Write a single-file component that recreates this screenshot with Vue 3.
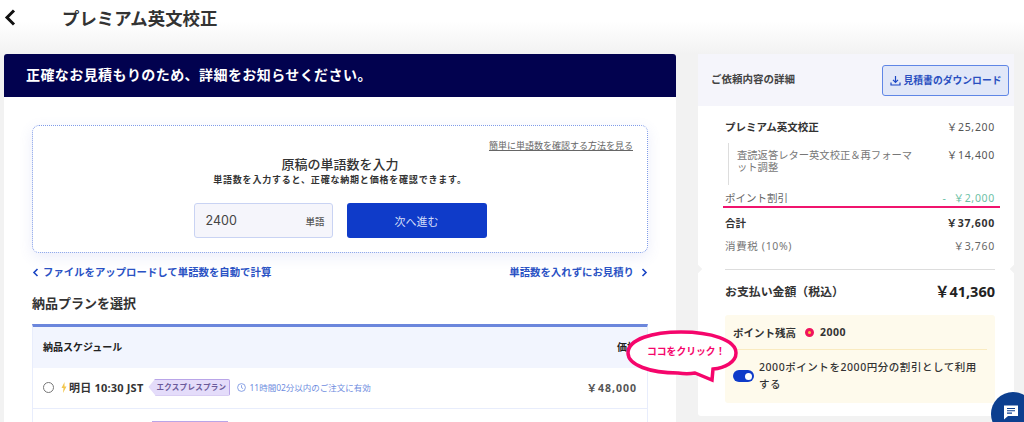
<template>
  <div class="page">
    <!-- 上部バー -->
    <header class="topbar">
      <svg class="back" width="12" height="17" viewBox="0 0 12 17"><path d="M10 1.500 3 8.500l7 7" fill="none" stroke="#111" stroke-width="3" /></svg>
      <h1>プレミアム英文校正</h1>
    </header>

    <div class="main">
      <!-- 左カラム -->
      <section class="left-card">
        <div class="banner">正確なお見積もりのため、詳細をお知らせください。</div>
        <div class="left-body">
          <div class="word-box">
            <a class="how-link">簡単に単語数を確認する方法を見る</a>
            <h2>原稿の単語数を入力</h2>
            <p class="sub">単語数を入力すると、正確な納期と価格を確認できます。</p>
            <div class="input-row">
              <div class="word-input"><span class="num">2400</span><span class="unit">単語</span></div>
              <button class="next">次へ進む</button>
            </div>
          </div>

          <div class="links">
            <a><svg width="7" height="9" viewBox="0 0 7 9"><path d="M5.500 1 2 4.500 5.500 8" fill="none" stroke="#1a45c4" stroke-width="1.600" /></svg>ファイルをアップロードして単語数を自動で計算</a>
            <a>単語数を入れずにお見積り<svg class="right" width="7" height="9" viewBox="0 0 7 9"><path d="M1.500 1 5 4.500 1.500 8" fill="none" stroke="#1a45c4" stroke-width="1.600" /></svg></a>
          </div>

          <h3>納品プランを選択</h3>
          <div class="plan-table">
            <div class="plan-head"><span>納品スケジュール</span><span>価格</span></div>
            <div class="plan-row">
              <span class="radio"></span>
              <svg class="bolt" width="6" height="11" viewBox="0 0 6 11"><path d="M3.500 0 .5 6h2L2 11l3.500-6.500h-2z" fill="#f2c64e" /></svg>
              <span class="date">明日 10:30 JST</span>
              <span class="tag">エクスプレスプラン</span>
              <svg class="clock" width="9" height="9" viewBox="0 0 9 9"><circle cx="4.500" cy="4.500" r="3.900" fill="none" stroke="#6f8de0" stroke-width=".8" /><path d="M4.500 2.200v2.500l1.600.9" fill="none" stroke="#6f8de0" stroke-width=".8" /></svg>
              <span class="limit">11時間02分以内のご注文に有効</span>
              <span class="price">￥48,000</span>
            </div>
            <div class="plan-row next-row"><span class="tag-next"></span></div>
          </div>
        </div>
      </section>

      <!-- 右カラム -->
      <aside class="side-card">
        <div class="side-head">
          <span class="side-title">ご依頼内容の詳細</span>
          <button class="dl">
            <svg width="11" height="11" viewBox="0 0 11 11"><path d="M5.500 1v6M3 4.800l2.500 2.500L8 4.800M1 7.500V10h9V7.500" fill="none" stroke="#1a45c4" stroke-width="1.200" /></svg>
            見積書のダウンロード
          </button>
        </div>
        <div class="side-body">
          <div class="line strong"><span>プレミアム英文校正</span><span class="yen normal">￥25,200</span></div>
          <div class="line option">
            <span class="opt-name">査読返答レター英文校正＆再フォーマット調整</span><span class="yen">￥14,400</span>
          </div>
          <div class="line discount"><span>ポイント割引</span><span class="yen green">-&nbsp; ￥2,000</span></div>
          <div class="line total"><span>合計</span><span class="yen">￥37,600</span></div>
          <div class="line tax"><span class="tax-name">消費税 (10%)</span><span class="yen">￥3,760</span></div>
          <div class="pay"><span>お支払い金額（税込）</span><span class="pay-num">￥41,360</span></div>
          <div class="points">
            <div class="balance">
              <span>ポイント残高</span><i class="coin"></i><span class="pt">2000</span>
            </div>
            <div class="use">
              <span class="toggle"></span>
              <span>2000ポイントを2000円分の割引として利用する</span>
            </div>
          </div>
        </div>
      </aside>
    </div>

    <!-- 吹き出し -->
    <div class="callout">
      <svg width="116" height="56" viewBox="0 0 116 56">
        <path d="M56 3c30 0 55 8 55 21 0 9-11 15-23 16l-1 11-17-7c-5 1-11 1-17 0C25 44 3 36 3 24 3 10 28 3 56 3z" fill="#fff" stroke="#f5056b" stroke-width="3.500" />
      </svg>
      <span>ココをクリック！</span>
    </div>

    <div class="chat">
      <svg width="16" height="15" viewBox="0 0 16 15"><path d="M1 .5h14v10.500H5L1 14.500z" fill="#fff" /><path d="M4 3.500h8M4 5.800h8M4 8.100h5" stroke="#0c3f8f" stroke-width="1.100" /></svg>
    </div>
  </div>
</template>

<script setup>
</script>

<style>
html, body { margin: 0; }
</style>

<style scoped>
.page {
  position: relative;
  width: 1024px;
  height: 422px;
  overflow: hidden;
  background: #f2f2f2;
  color: #333;
  font-family: "Noto Sans", "Noto Sans CJK JP", sans-serif;
  font-size: 10.500px;
}

.topbar {
  display: flex;
  align-items: center;
  height: 34px;
  padding: 0 0 20px 4px;
  background: linear-gradient(#fff 40%, #f2f2f2);
}
.topbar h1 {
  margin: 0 0 0 46px;
  font-size: 17.400px;
  font-weight: 700;
  color: #333;
}
.back { flex: none; }

.main {
  display: flex;
  align-items: flex-start;
  gap: 22px;
  padding-left: 4px;
}

.left-card {
  width: 672px;
  height: 368px;
  background: #fff;
  border-radius: 3px 3px 0 0;
  overflow: hidden;
  flex: none;
}
.banner {
  height: 43px;
  line-height: 41px;
  padding-left: 22px;
  background: #02024f;
  color: #fff;
  font-size: 14px;
  font-weight: 700;
  letter-spacing: .42px;
}
.left-body {
  padding: 28px 28px 0;
}

.word-box {
  display: flex;
  flex-direction: column;
  align-items: center;
  height: 128px;
  box-sizing: border-box;
  padding: 14px 14px 0;
  border: 1px dotted #7f9be8;
  border-radius: 7px;
  box-shadow: 0 4px 14px rgba(90, 110, 210, .12);
}
.how-link {
  align-self: flex-end;
  font-size: 9px;
  line-height: 12px;
  color: #666;
  text-decoration: underline;
}
.word-box h2 {
  margin: 3px 0 0;
  font-size: 13px;
  line-height: 18px;
  font-weight: 500;
  color: #333;
}
.sub {
  margin: 0;
  font-size: 9px;
  line-height: 14px;
  font-weight: 700;
  letter-spacing: .8px;
  color: #333;
}
.input-row {
  display: flex;
  gap: 14px;
  margin-top: 16px;
}
.word-input {
  display: flex;
  align-items: center;
  justify-content: space-between;
  width: 139px;
  height: 35px;
  box-sizing: border-box;
  padding: 0 7px 0 11px;
  border: 1px solid #c9d3f3;
  border-radius: 3px;
  background: #f5f5fb;
}
.num {
  font-family: Inter, sans-serif;
  font-size: 12.500px;
  color: #444;
}
.unit {
  font-size: 9.500px;
  font-weight: 500;
  color: #555;
}
.next {
  width: 140px;
  height: 35px;
  border: 0;
  border-radius: 3px;
  background: #0f3bc9;
  color: #d5def8;
  font-family: inherit;
  font-size: 11px;
}

.links {
  display: flex;
  justify-content: space-between;
  margin-top: 11px;
  line-height: 16px;
  font-weight: 700;
  font-size: 10.400px;
  color: #2a52c4;
}
.links a {
  display: flex;
  align-items: center;
}
.links svg { margin-right: 4px; }
.links .right { margin: 0 0 0 7px; }

.left-body h3 {
  margin: 13px 0 0;
  font-size: 13px;
  line-height: 20px;
  font-weight: 700;
  color: #333;
}

.plan-table {
  margin-top: 11px;
  border-top: 3px solid #6b86dc;
  border-left: 1px solid #e8edfc;
  border-right: 1px solid #e8edfc;
}
.plan-head {
  display: flex;
  align-items: center;
  justify-content: space-between;
  height: 39px;
  padding: 0 10px 2px;
  background: #f2f5fe;
  font-size: 10px;
  font-weight: 700;
  color: #222;
}
.plan-row {
  display: flex;
  align-items: center;
  height: 38px;
  padding: 0 10px 2px;
  border-bottom: 1px solid #e8edfc;
}
.radio {
  width: 9px;
  height: 9px;
  border: 1.500px solid #777;
  border-radius: 50%;
  flex: none;
}
.bolt { margin-left: 7px; }
.date {
  margin-left: 2px;
  font-size: 11px;
  font-weight: 700;
  letter-spacing: .2px;
  color: #333;
  white-space: nowrap;
}
.tag {
  margin-left: 5px;
  height: 15px;
  line-height: 15px;
  padding: 0 3px 0 8px;
  background: #e4dcfa;
  border: 1px solid #b9a5e8;
  border-left: 0;
  border-radius: 0 2px 2px 0;
  clip-path: polygon(0 50%, 7px 0, 100% 0, 100% 100%, 7px 100%);
  font-size: 7.500px;
  font-weight: 700;
  letter-spacing: .3px;
  color: #6a5a9a;
  white-space: nowrap;
}
.clock { margin-left: 7px; }
.limit {
  margin-left: 3px;
  font-size: 8.500px;
  color: #6f8de0;
  white-space: nowrap;
}
.price {
  margin-left: auto;
  font-size: 10.500px;
  font-weight: 700;
  letter-spacing: 1px;
  color: #555;
}
.next-row {
  align-items: flex-start;
  border-bottom: 0;
}
.tag-next {
  margin: 12px 0 0 109px;
  width: 74px;
  height: 15px;
  background: #e4dcfa;
  border: 1px solid #b9a5e8;
}

.side-card {
  position: relative;
  width: 316px;
  height: 362px;
  background: #fff;
  border-radius: 3px;
  flex: none;
}
.side-card::before,
.side-card::after {
  content: "";
  position: absolute;
  top: 212px;
  width: 6px;
  height: 6px;
  background: #f2f2f2;
  transform: rotate(45deg);
}
.side-card::before { left: -3px; }
.side-card::after { right: -3px; }
.side-head {
  display: flex;
  align-items: center;
  justify-content: space-between;
  height: 52px;
  padding: 0 5px 0 13px;
  background: #f5f5fb;
  font-weight: 700;
  font-size: 10.500px;
  color: #444;
}
.side-title { margin-top: -3px; }
.dl {
  display: flex;
  align-items: center;
  justify-content: center;
  gap: 3px;
  width: 127px;
  height: 31px;
  padding: 0;
  border: 1px solid #5f86e6;
  border-radius: 3px;
  background: #e1e7f8;
  color: #2a4fc0;
  font-family: inherit;
  font-size: 9.800px;
  font-weight: 700;
}
.side-body {
  padding: 13px 19px 0 27px;
}
.line {
  display: flex;
  justify-content: space-between;
  line-height: 16px;
}
.yen {
  letter-spacing: .7px;
  color: #666;
}
.strong { font-weight: 700; color: #333; }
.yen.normal { font-weight: 400; color: #555; }
.option {
  margin: 8px 0 0 3px;
  height: 36px;
  padding: 6px 0 0 8px;
  border-left: 1px solid #ddd;
  color: #777;
  line-height: 12px;
  align-items: flex-start;
}
.option .yen { line-height: 12px; color: #555; }
.opt-name {
  width: 185px;
  font-size: 10.300px;
}
.discount {
  margin: 5px -5px 0 -2px;
  padding: 0 5px 0 2px;
  border-bottom: 2px solid #f0146e;
  color: #666;
}
.green { color: #6cbfa5; }
.total {
  margin-top: 7px;
  font-weight: 700;
  color: #333;
}
.total .yen { color: #333; }
.tax {
  margin-top: 7px;
  color: #777;
}
.tax-name { letter-spacing: .65px; }
.pay {
  display: flex;
  align-items: center;
  justify-content: space-between;
  margin-top: 15px;
  padding-top: 10px;
  border-top: 1px solid #ddd;
  font-size: 11.900px;
  font-weight: 700;
  color: #333;
  line-height: 22px;
}
.pay-num {
  font-size: 14.500px;
  color: #222;
}
.points {
  margin-top: 13px;
  height: 88px;
  box-sizing: border-box;
  padding: 0 8px;
  background: #fefaec;
  border-radius: 3px;
  font-weight: 500;
}
.balance {
  display: flex;
  align-items: center;
  height: 34px;
  border-bottom: 1px solid #faebc0;
  font-weight: 700;
}
.coin {
  box-sizing: border-box;
  width: 9px;
  height: 9px;
  margin: 0 6px 0 9px;
  border: 3px solid #f0145e;
  border-radius: 50%;
  background: #f7c53e;
}
.pt { letter-spacing: .5px; }
.use {
  display: flex;
  align-items: center;
  gap: 5px;
  padding: 9px 8px 0 0;
  line-height: 17px;
  letter-spacing: .55px;
}
.toggle {
  position: relative;
  flex: none;
  width: 21px;
  height: 12px;
  border-radius: 6px;
  background: #0f3bc9;
}
.toggle::after {
  content: "";
  position: absolute;
  top: 2.500px;
  right: 2.500px;
  width: 7px;
  height: 7px;
  border-radius: 50%;
  background: #fff;
}

.callout {
  position: absolute;
  left: 625px;
  top: 329px;
  width: 116px;
  height: 56px;
}
.callout svg { display: block; }
.callout span {
  position: absolute;
  left: 22px;
  top: 15px;
  font-size: 9.800px;
  line-height: 16px;
  font-weight: 700;
  color: #f5056b;
  white-space: nowrap;
}

.chat {
  position: absolute;
  left: 991px;
  top: 392px;
  width: 44px;
  height: 44px;
  border-radius: 50%;
  background: #0c3f8f;
}
.chat svg {
  position: absolute;
  left: 12px;
  top: 13px;
}
</style>
